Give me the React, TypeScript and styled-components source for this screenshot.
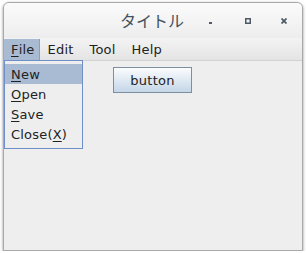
import React from 'react';
import styled, { createGlobalStyle } from 'styled-components';

const GlobalStyle = createGlobalStyle`
  html, body {
    margin: 0;
    padding: 0;
    background: #ffffff;
  }
  body {
    font-family: 'DejaVu Sans', 'Noto Sans CJK JP', sans-serif;
  }
`;

const Window = styled.div`
  position: relative;
  margin: 2px 0 0 3px;
  width: 298px;
  height: 247px;
  border: 1px solid #a9a9a9;
  border-radius: 6px 6px 0 0;
  background: #eeeeee;
  box-shadow: 0 1px 3px rgba(0, 0, 0, 0.45);
  display: flex;
  flex-direction: column;
  overflow: hidden;
`;

const TitleBar = styled.div`
  height: 35px;
  display: flex;
  align-items: center;
  background: linear-gradient(#fbfbfb, #ededed);
  position: relative;
`;

const Title = styled.div`
  flex: 1;
  text-align: center;
  font-family: 'Noto Sans CJK JP', sans-serif;
  font-size: 16px;
  font-weight: 400;
  color: #45525e;
  margin-bottom: 1px;
  padding-right: 2px;
`;

const Controls = styled.div`
  position: absolute;
  right: 0;
  top: 0;
  height: 100%;
  display: flex;
  align-items: center;
`;

const Control = styled.div`
  width: 36px;
  height: 36px;
  display: flex;
  align-items: center;
  justify-content: center;
`;

const MenuBar = styled.div`
  height: 22px;
  display: flex;
  background: linear-gradient(#f3f3f3, #e4e4e4);
  font-size: 13px;
  color: #222222;
  letter-spacing: 0.2px;
`;

const MenuTitle = styled.div<{ $active?: boolean }>`
  padding: ${(p) => (p.$active ? '0 4px 0 7px' : '0 7px 0 8px')};
  display: flex;
  align-items: center;
  background: ${(p) => (p.$active ? '#a8bbd2' : 'transparent')};
  border-right: 1px solid ${(p) => (p.$active ? '#8aa0bb' : 'transparent')};
  margin-top: 1px;
`;

const Mnemonic = styled.span`
  text-decoration: underline;
  text-underline-offset: 2px;
`;

const Content = styled.div`
  flex: 1;
  display: flex;
  justify-content: center;
  align-items: flex-start;
  padding-top: 6px;
  border-top: 1px solid #d2d2d2;
`;

const Button = styled.button`
  width: 79px;
  height: 26px;
  border: 1px solid #7d8e9e;
  border-radius: 0;
  background: linear-gradient(#fbfcfd, #c4d6e8);
  font-family: 'DejaVu Sans', sans-serif;
  font-size: 13px;
  letter-spacing: 0.3px;
  color: #222222;
  padding: 0;
  margin-left: -1px;
`;

const Popup = styled.div`
  position: absolute;
  left: 0;
  top: 57px;
  width: 77px;
  padding: 3px 0 4px;
  border: 1px solid #6e8fc8;
  background: #eeeeee;
  font-size: 13px;
  letter-spacing: 0.2px;
  color: #222222;
`;

const PopupItem = styled.div<{ $active?: boolean }>`
  height: 20px;
  display: flex;
  align-items: center;
  padding-left: 6px;
  background: ${(p) => (p.$active ? '#a8bbd2' : 'transparent')};
`;

const items: { pre: string; key: string; post: string; active?: boolean }[] = [
  { pre: '', key: 'N', post: 'ew', active: true },
  { pre: '', key: 'O', post: 'pen' },
  { pre: '', key: 'S', post: 'ave' },
  { pre: 'Close(', key: 'X', post: ')' },
];

const App = () => (
  <>
    <GlobalStyle />
    <Window>
      <TitleBar>
        <Title>タイトル</Title>
        <Controls>
          <Control>
            <svg width="6" height="6" viewBox="0 0 6 6">
              <rect x="0" y="4" width="3" height="2" fill="#4e5b67" />
            </svg>
          </Control>
          <Control>
            <svg width="6" height="6" viewBox="0 0 6 6">
              <rect x="0.75" y="0.75" width="4.5" height="4.5" fill="none" stroke="#4e5b67" strokeWidth="1.5" />
            </svg>
          </Control>
          <Control>
            <svg width="6" height="6" viewBox="0 0 6 6">
              <path d="M0.5 0.5 L5.5 5.5 M5.5 0.5 L0.5 5.5" stroke="#4e5b67" strokeWidth="1.8" />
            </svg>
          </Control>
        </Controls>
      </TitleBar>
      <MenuBar>
        <MenuTitle $active>
          <Mnemonic>F</Mnemonic>ile
        </MenuTitle>
        <MenuTitle>Edit</MenuTitle>
        <MenuTitle>Tool</MenuTitle>
        <MenuTitle>Help</MenuTitle>
      </MenuBar>
      <Content>
        <Button>button</Button>
      </Content>
      <Popup>
        {items.map((it) => (
          <PopupItem key={it.key} $active={it.active}>
            {it.pre}
            <Mnemonic>{it.key}</Mnemonic>
            {it.post}
          </PopupItem>
        ))}
      </Popup>
    </Window>
  </>
);

export default App;
